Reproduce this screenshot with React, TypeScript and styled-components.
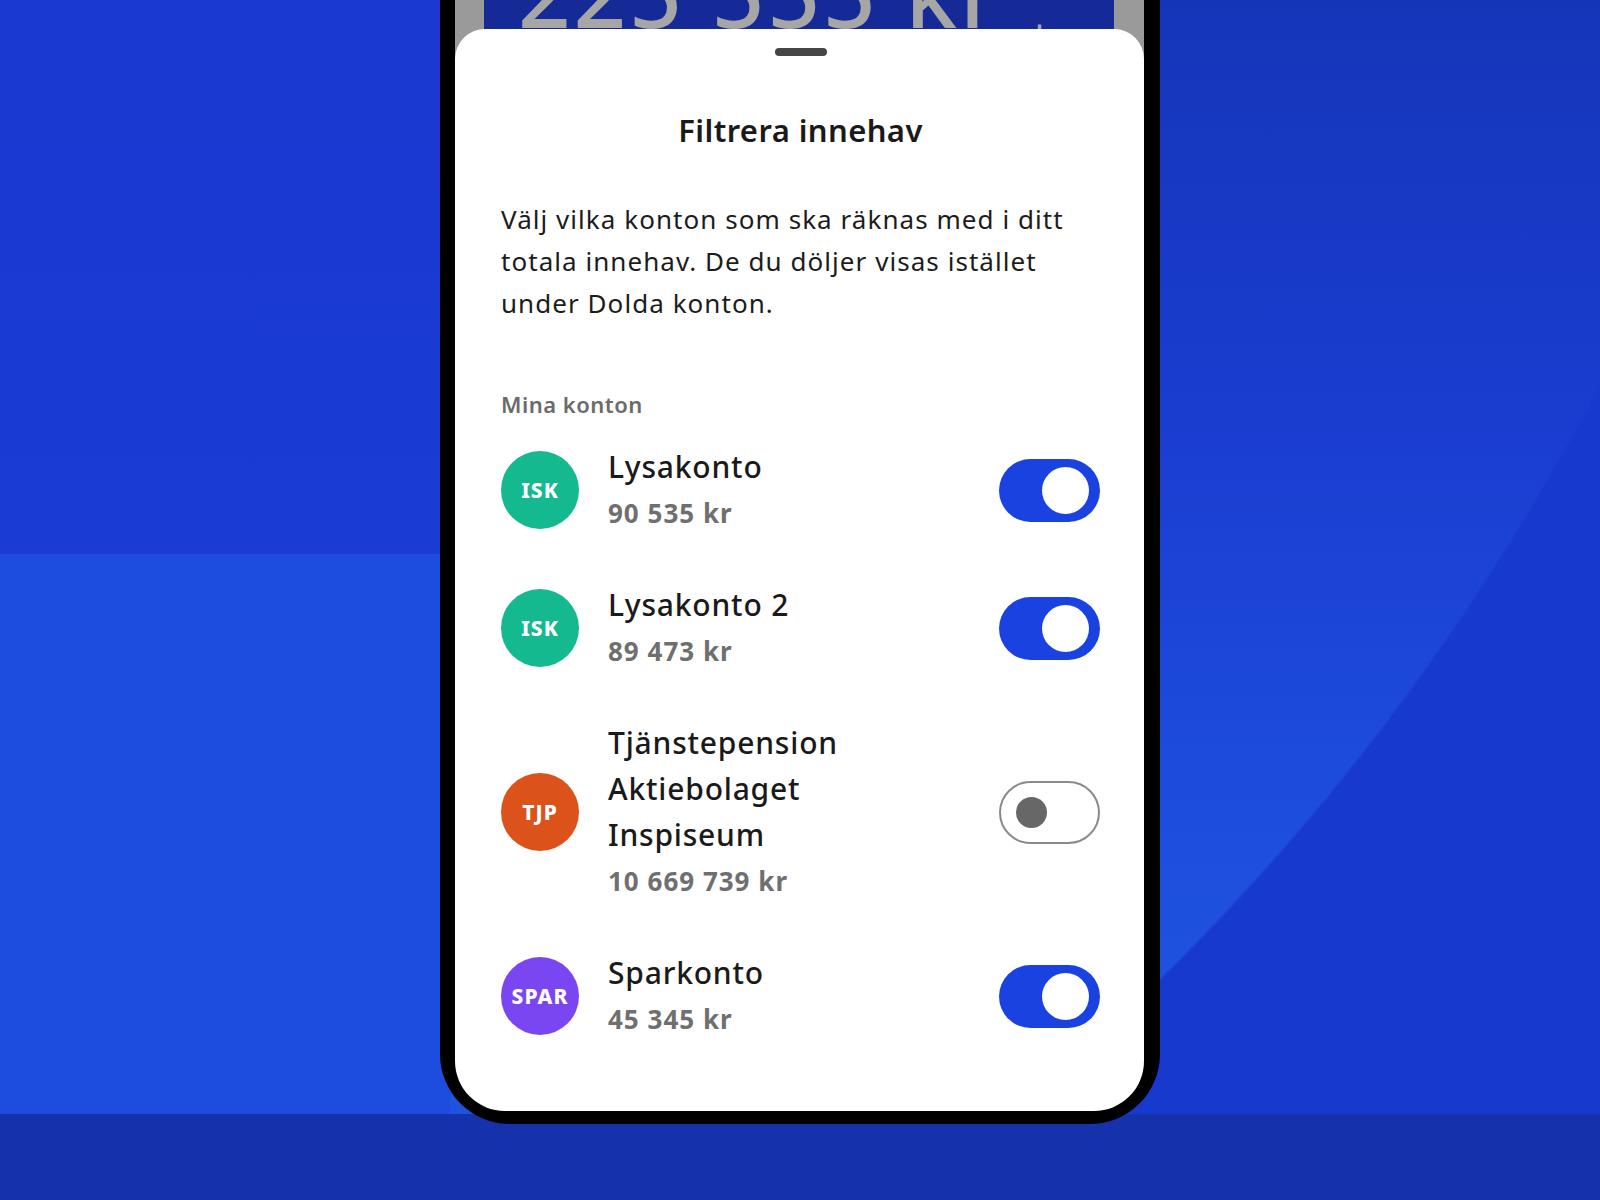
import * as React from 'react';
import styled, { createGlobalStyle } from 'styled-components';

const GlobalStyle = createGlobalStyle`
  html, body {
    margin: 0;
    padding: 0;
  }
  body {
    font-family: "Noto Sans", "Open Sans", sans-serif;
    -webkit-font-smoothing: antialiased;
  }
  * {
    box-sizing: border-box;
  }
`;

const Page = styled.div`
  width: 1600px;
  height: 1200px;
  overflow: hidden;
  display: flex;
  justify-content: center;
  align-items: flex-start;
  background:
    linear-gradient(180deg, transparent 1114px, #1531ab 1114px),
    linear-gradient(180deg, #1939d1 0, #1a3bd4 554px, #1d4ddf 554px) left top / 450px 100% no-repeat,
    radial-gradient(circle at -474px -688px, transparent 2333px, #1839cd 2336px),
    linear-gradient(180deg, #1535b9 0%, #1a3dd0 35%, #1d4cdc 65%, #1f53df 85%);
`;

const Phone = styled.div`
  width: 720px;
  padding: 0 16px 13px 15px;
  background: #000;
  border-radius: 0 0 70px 70px;
  display: flex;
  flex-direction: column;
`;

const BehindStrip = styled.div`
  height: 60px;
  padding: 0 30px 0 29px;
  background: #9a9a9a;
  display: flex;
`;

const BehindCard = styled.div`
  flex: 1;
  background: #152a97;
  overflow: hidden;
  padding-left: 34px;
`;

const BigAmount = styled.div`
  font-size: 92px;
  line-height: 92px;
  font-weight: 500;
  letter-spacing: 3px;
  color: #a6a6a6;
  margin-top: -53px;
  white-space: nowrap;

  sup {
    font-size: 40px;
    vertical-align: top;
    margin-left: 26px;
    position: relative;
    top: 40px;
  }
`;

const Sheet = styled.div`
  margin-top: -31px;
  position: relative;
  background: #fff;
  border-radius: 30px 30px 50px 50px;
  padding: 19px 44px 69px 46px;
  display: flex;
  flex-direction: column;
`;

const Handle = styled.div`
  align-self: center;
  width: 52px;
  height: 8px;
  border-radius: 4px;
  background: #464646;
`;

const Title = styled.h2`
  margin: 54px 0 0;
  text-align: center;
  font-size: 31px;
  line-height: 40px;
  font-weight: 600;
  letter-spacing: 0.4px;
  color: #1a1a1a;
`;

const Intro = styled.p`
  margin: 48px 0 0;
  font-size: 26px;
  line-height: 42px;
  letter-spacing: 1.05px;
  color: #1c1c1c;
`;

const SectionLabel = styled.div`
  margin-top: 65px;
  font-size: 22px;
  line-height: 30px;
  font-weight: 600;
  letter-spacing: 0.5px;
  color: #6b6b6b;
`;

const AccountList = styled.div`
  margin-top: 25px;
  display: flex;
  flex-direction: column;
  gap: 46px;
`;

const Row = styled.div`
  display: flex;
  align-items: center;
`;

const Avatar = styled.div<{ $color: string }>`
  width: 78px;
  height: 78px;
  flex-shrink: 0;
  border-radius: 50%;
  background: ${(p) => p.$color};
  color: #fff;
  display: flex;
  align-items: center;
  justify-content: center;
  font-size: 21px;
  font-weight: 800;
  letter-spacing: 1px;
  margin-right: 29px;
`;

const Info = styled.div`
  flex: 1;
  display: flex;
  flex-direction: column;
`;

const Name = styled.div`
  max-width: 320px;
  font-size: 30px;
  line-height: 46px;
  font-weight: 500;
  letter-spacing: 0.8px;
  color: #1a1a1a;
`;

const Amount = styled.div`
  font-size: 26px;
  line-height: 46px;
  font-weight: 700;
  letter-spacing: 1px;
  color: #6f6f6f;
`;

const Toggle = styled.div<{ $on: boolean }>`
  width: 101px;
  height: 63px;
  flex-shrink: 0;
  border-radius: 32px;
  display: flex;
  align-items: center;
  justify-content: ${(p) => (p.$on ? 'flex-end' : 'flex-start')};
  padding: ${(p) => (p.$on ? '0 11px' : '0 15px')};
  background: ${(p) => (p.$on ? '#1942e0' : '#fff')};
  border: ${(p) => (p.$on ? 'none' : '2px solid #8a8a8a')};
`;

const Knob = styled.div<{ $on: boolean }>`
  width: ${(p) => (p.$on ? '47px' : '31px')};
  height: ${(p) => (p.$on ? '47px' : '31px')};
  border-radius: 50%;
  background: ${(p) => (p.$on ? '#fff' : '#676767')};
`;

interface Account {
  tag: string;
  color: string;
  name: string;
  amount: string;
  visible: boolean;
}

const accounts: Account[] = [
  { tag: 'ISK', color: '#15b98f', name: 'Lysakonto', amount: '90 535 kr', visible: true },
  { tag: 'ISK', color: '#15b98f', name: 'Lysakonto 2', amount: '89 473 kr', visible: true },
  {
    tag: 'TJP',
    color: '#dc521b',
    name: 'Tjänstepension Aktiebolaget Inspiseum',
    amount: '10 669 739 kr',
    visible: false,
  },
  { tag: 'SPAR', color: '#7a46f1', name: 'Sparkonto', amount: '45 345 kr', visible: true },
];

export default function App() {
  return (
    <>
      <GlobalStyle />
      <Page>
        <Phone>
          <BehindStrip>
            <BehindCard>
              <BigAmount>
                225 555 kr<sup>+</sup>
              </BigAmount>
            </BehindCard>
          </BehindStrip>
          <Sheet>
            <Handle />
            <Title>Filtrera innehav</Title>
            <Intro>
              Välj vilka konton som ska räknas med i ditt totala innehav. De du döljer visas
              istället under Dolda konton.
            </Intro>
            <SectionLabel>Mina konton</SectionLabel>
            <AccountList>
              {accounts.map((a) => (
                <Row key={a.name}>
                  <Avatar $color={a.color}>{a.tag}</Avatar>
                  <Info>
                    <Name>{a.name}</Name>
                    <Amount>{a.amount}</Amount>
                  </Info>
                  <Toggle $on={a.visible}>
                    <Knob $on={a.visible} />
                  </Toggle>
                </Row>
              ))}
            </AccountList>
          </Sheet>
        </Phone>
      </Page>
    </>
  );
}
